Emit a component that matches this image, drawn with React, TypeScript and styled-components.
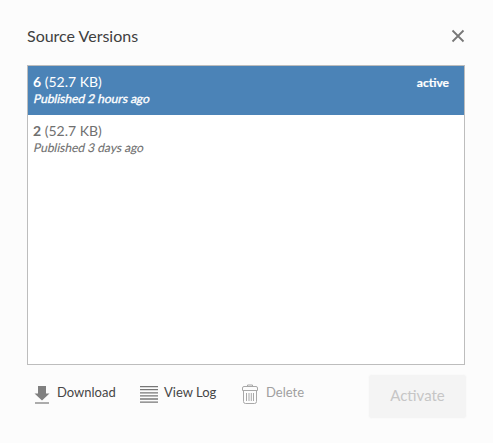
import React from 'react';
import styled, { createGlobalStyle } from 'styled-components';

const GlobalStyle = createGlobalStyle`
  *, *::before, *::after { box-sizing: border-box; }
  body { margin: 0; background: #fcfcfc; font-family: Lato, sans-serif; }
`;

const Dialog = styled.section`
  display: flex;
  flex-direction: column;
  width: 493px;
  height: 443px;
  padding: 26px 28px 0 27px;
  background: #fcfcfc;
`;

const Header = styled.header`
  display: flex;
  justify-content: space-between;
  height: 39px;
`;

const Title = styled.h1`
  margin: 0;
  font-size: 16px;
  font-weight: 400;
  line-height: 20px;
  color: #404040;
`;

const CloseButton = styled.button`
  width: 14px;
  height: 14px;
  margin-top: 3px;
  padding: 0;
  border: 0;
  background: none;
  svg { display: block; }
`;

const VersionList = styled.ul`
  height: 300px;
  margin: 0;
  padding: 0;
  list-style: none;
  border: 1px solid #bdbdbd;
  background: #fff;
`;

const VersionRow = styled.li<{ $active?: boolean }>`
  display: flex;
  justify-content: space-between;
  height: 49px;
  padding: 7px 15px 0 5px;
  color: ${p => (p.$active ? '#fff' : '#707070')};
  background: ${p => (p.$active ? '#4b83b7' : '#fff')};
`;

const VersionName = styled.div`
  font-size: 14px;
  line-height: 17px;
`;

const Published = styled.div<{ $active?: boolean }>`
  padding-left: 1px;
  font-size: 12px;
  line-height: 17px;
  transform: skewX(-12deg);
  -webkit-text-stroke: ${p => (p.$active ? '0.35px' : '0.1px')};
`;

const Status = styled.span`
  font-size: 12px;
  font-weight: 700;
  line-height: 20px;
  -webkit-text-stroke: 0.2px;
`;

const Footer = styled.footer`
  display: flex;
  justify-content: space-between;
  padding-top: 10px;
  margin-right: -1px;
`;

const Actions = styled.div`
  display: flex;
  align-items: flex-start;
  padding: 9px 0 0 7px;
`;

const ActionButton = styled.button<{ $width: number }>`
  display: flex;
  width: ${p => p.$width}px;
  padding: 0;
  border: 0;
  background: none;
  font: 400 13px/17px Lato, sans-serif;
  color: #464646;
  &:disabled { color: #a0a0a0; }
  svg { flex: none; }
`;

const ActivateButton = styled.button`
  width: 97px;
  height: 43px;
  padding: 0 0 4px;
  border: 0;
  border-radius: 3px;
  background: #f4f4f4;
  box-shadow: 0 0 2px #f2f2f2;
  font: 400 15px/20px Lato, sans-serif;
  color: #c6c6c6;
`;

const CloseIcon = () => (
  <svg width="14" height="14" viewBox="0 0 14 14">
    <path d="M1.5 1.5 12.5 12.5M12.5 1.5 1.5 12.5" stroke="#777" strokeWidth="1.8" fill="none" />
  </svg>
);

const DownloadIcon = () => (
  <svg width="23" height="22" viewBox="0 0 23 22">
    <path d="M4 2h8v7.5h3.5L8 16.5 0.5 9.5H4z" fill="#808080" />
    <path d="M1 19h14" stroke="#929292" strokeWidth="1.5" />
  </svg>
);

const LogIcon = () => (
  <svg width="24" height="22" viewBox="0 0 24 22">
    <path d="M0 2.6h18M0 5.7h18M0 8.8h18M0 11.9h18M0 15h18M0 18.1h18" stroke="#777" strokeWidth="1.3" />
  </svg>
);

const TrashIcon = () => (
  <svg width="24" height="22" viewBox="0 0 24 22">
    <g fill="none" stroke="#a8a8a8">
      <path d="M.5 6.5V4q0-1.5 1.5-1.5h12q1.5 0 1.5 1.5v2.5zM5.5 2.5V1h5v1.5" />
      <path d="M1.5 6.5v11q0 2 2 2h9q2 0 2-2v-11" />
      <path d="M4.5 9v8M7 9v8M9.3 9v8M11.5 9v8" />
    </g>
  </svg>
);

const versions = [
  { id: 6, size: '52.7 KB', published: 'Published 2 hours ago', active: true },
  { id: 2, size: '52.7 KB', published: 'Published 3 days ago', active: false },
];

export default function App() {
  return (
    <>
      <GlobalStyle />
      <Dialog>
        <Header>
          <Title>Source Versions</Title>
          <CloseButton aria-label="Close"><CloseIcon /></CloseButton>
        </Header>
        <VersionList>
          {versions.map(v => (
            <VersionRow key={v.id} $active={v.active}>
              <div>
                <VersionName><b>{v.id}</b> ({v.size})</VersionName>
                <Published $active={v.active}>{v.published}</Published>
              </div>
              {v.active && <Status>active</Status>}
            </VersionRow>
          ))}
        </VersionList>
        <Footer>
          <Actions>
            <ActionButton $width={106}><DownloadIcon />Download</ActionButton>
            <ActionButton $width={102}><LogIcon />View Log</ActionButton>
            <ActionButton $width={70} disabled><TrashIcon />Delete</ActionButton>
          </Actions>
          <ActivateButton disabled>Activate</ActivateButton>
        </Footer>
      </Dialog>
    </>
  );
}
